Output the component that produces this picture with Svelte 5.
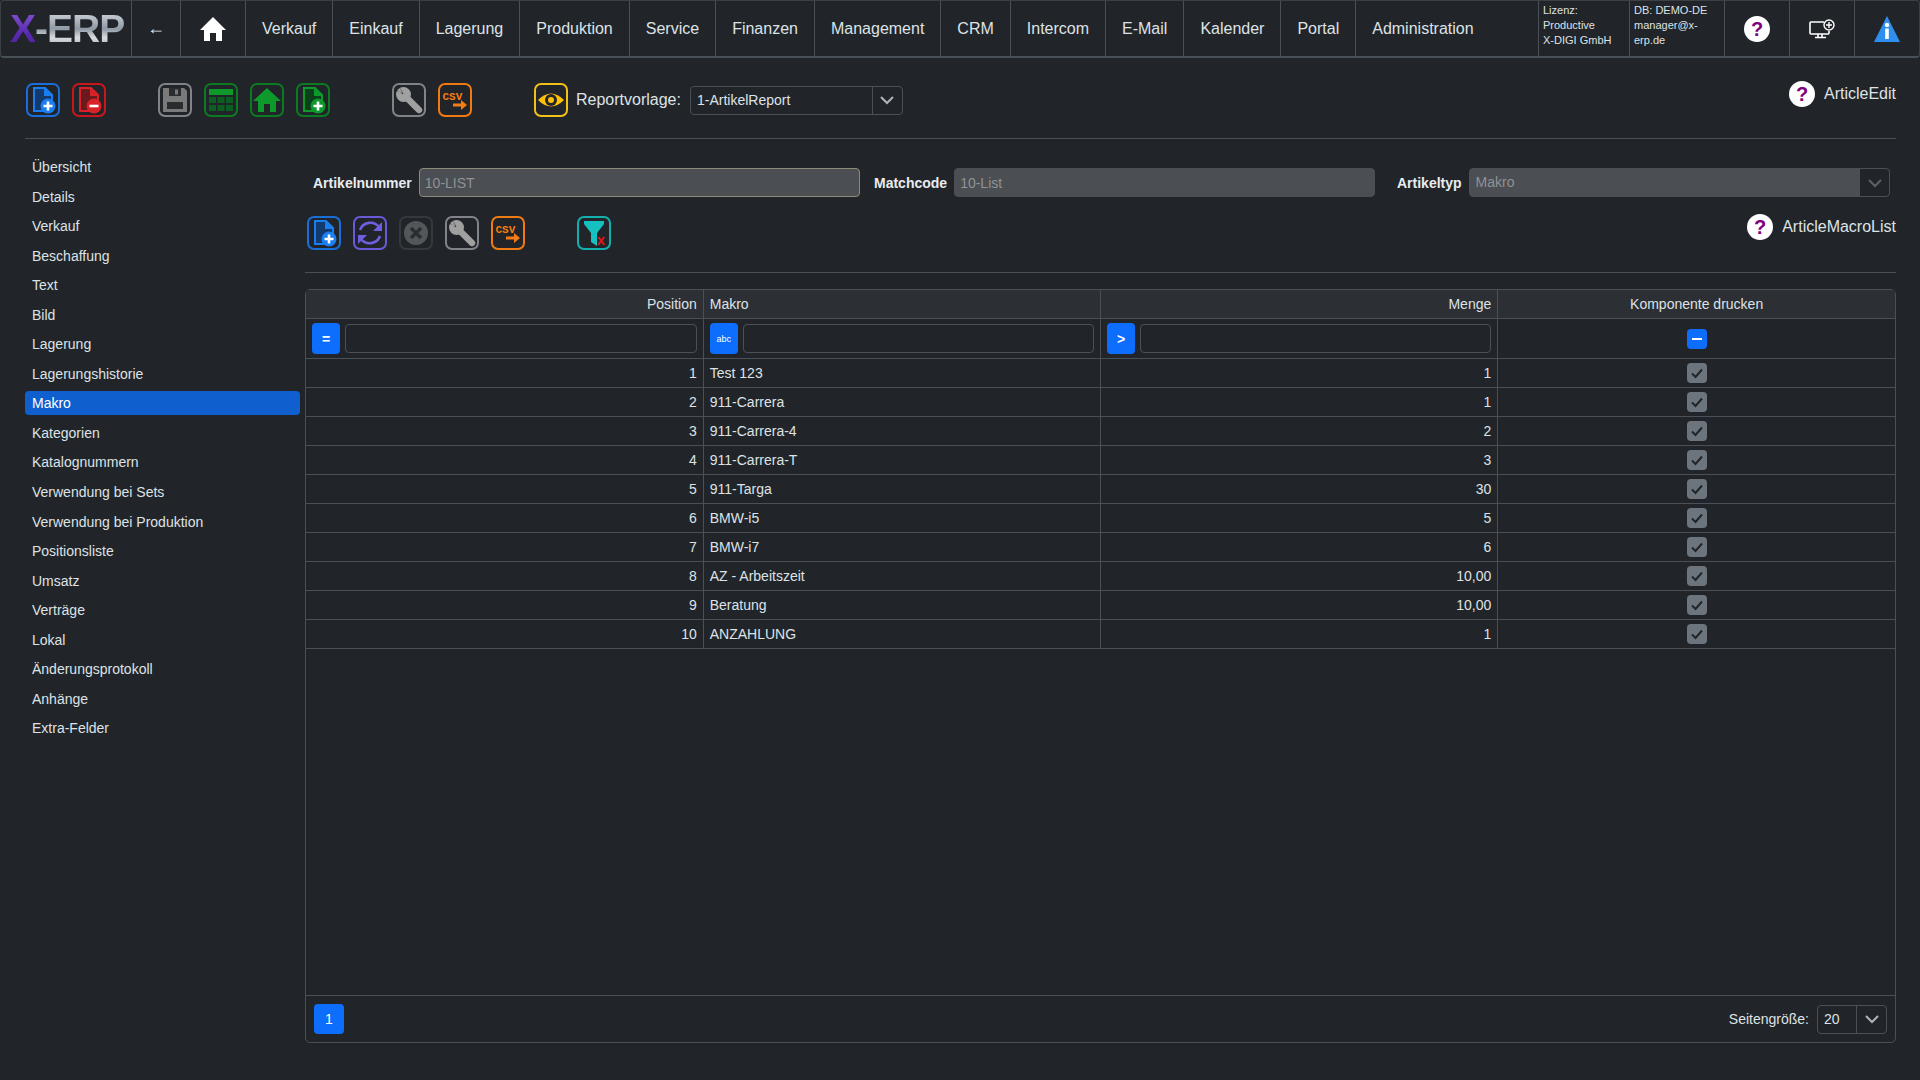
<script>
  const menu = ["Verkauf", "Einkauf", "Lagerung", "Produktion", "Service", "Finanzen", "Management", "CRM", "Intercom", "E-Mail", "Kalender", "Portal"];
  const side = ["Übersicht", "Details", "Verkauf", "Beschaffung", "Text", "Bild", "Lagerung", "Lagerungshistorie", "Makro", "Kategorien", "Katalognummern", "Verwendung bei Sets", "Verwendung bei Produktion", "Positionsliste", "Umsatz", "Verträge", "Lokal", "Änderungsprotokoll", "Anhänge", "Extra-Felder"];
  const rows = [
    ["Test 123", "1"],
    ["911-Carrera", "1"],
    ["911-Carrera-4", "2"],
    ["911-Carrera-T", "3"],
    ["911-Targa", "30"],
    ["BMW-i5", "5"],
    ["BMW-i7", "6"],
    ["AZ - Arbeitszeit", "10,00"],
    ["Beratung", "10,00"],
    ["ANZAHLUNG", "1"]
  ];
</script>

{#snippet doc(color, dark, sign)}
  <svg viewBox="0 0 30 30" width="30" height="30">
    <path d="M6 3h11l7 7v16H6z" fill={dark} stroke={color} stroke-width="2" />
    <path d="M16 3v8h8z" fill={color} />
    <circle cx="20" cy="21" r="7.5" fill={color} />
    <path d={sign === "+" ? "M20 16.5v9M15.5 21h9" : "M15.5 21h9"} stroke="#fff" stroke-width="2.6" />
  </svg>
{/snippet}

{#snippet wrench()}
  <svg viewBox="0 0 30 30" width="30" height="30">
    <path d="M11 11L25 25" stroke="#a0a0a0" stroke-width="6.5" stroke-linecap="round" />
    <circle cx="9.5" cy="9.5" r="7.5" fill="#a0a0a0" />
    <path d="M9 9.5L5 1H1v3z M9.5 9L1 5v-4h4z" fill="#212529" />
  </svg>
{/snippet}

{#snippet csv()}
  <svg viewBox="0 0 30 30" width="30" height="30">
    <text x="2.5" y="15" class="csv">CSV</text>
    <path d="M13 20h11" stroke="#f57c14" stroke-width="3" />
    <path d="M21 15l6 5-6 5z" fill="#f57c14" />
  </svg>
{/snippet}

{#snippet chevron(color)}
  <svg viewBox="0 0 16 16" width="16" height="16">
    <path d="M2 5l6 6 6-6" fill="none" stroke={color} stroke-width="2" />
  </svg>
{/snippet}

{#snippet help(name)}
  <div class="help">
    <svg viewBox="0 0 26 26" width="26" height="26">
      <circle cx="13" cy="13" r="13" fill="#fff" />
      <text x="13" y="20" class="q">?</text>
    </svg>
    <span>{name}</span>
  </div>
{/snippet}

<div class="nav">
  <div class="cell logo"><span class="x">X</span><span class="erp">-ERP</span></div>
  <div class="cell back">←</div>
  <div class="cell home">
    <svg viewBox="0 0 26 24" width="26" height="24">
      <path d="M13 0L26 13h-4v11h-6v-8h-6v8H4V13H0z" fill="#fff" />
    </svg>
  </div>
  {#each menu as item}
    <div class="cell item">{item}</div>
  {/each}
  <div class="cell item grow">Administration</div>
  <div class="cell info w91">
    <span>Lizenz: Productive</span>
    <span>X-DIGI GmbH</span>
  </div>
  <div class="cell info w95">
    <span>DB: DEMO-DE</span>
    <span>manager@x-erp.de</span>
  </div>
  <div class="cell icon">
    <svg viewBox="0 0 26 26" width="26" height="26">
      <circle cx="13" cy="13" r="13" fill="#fff" />
      <text x="13" y="20" class="q">?</text>
    </svg>
  </div>
  <div class="cell icon">
    <svg viewBox="0 0 26 20" width="26" height="20">
      <path d="M15 3H2a1 1 0 0 0-1 1v10a1 1 0 0 0 1 1h17a1 1 0 0 0 1-1v-2" fill="none" stroke="#fff" stroke-width="1.6" />
      <path d="M9 15v3M13 15v3M6 18.5h11" stroke="#fff" stroke-width="1.6" />
      <circle cx="20" cy="6" r="5" fill="#212529" stroke="#fff" stroke-width="1.4" />
      <path d="M20 3v6M17 6h6" stroke="#fff" stroke-width="1.4" />
    </svg>
  </div>
  <div class="cell icon">
    <svg viewBox="0 0 26 26" width="26" height="26">
      <path d="M13 0L26 26H0z" fill="#2f8fef" />
      <circle cx="13" cy="9" r="2.2" fill="#fff" />
      <path d="M13 12.5V23" stroke="#fff" stroke-width="3.6" />
    </svg>
  </div>
</div>

<div class="top">
  <div class="tools first">
    <div class="tb blue">{@render doc("#1a7ef0", "#123a6c", "+")}</div>
    <div class="tb red">{@render doc("#d92228", "#6a1a1e", "-")}</div>
    <div class="tb grey sep52">
      <svg viewBox="0 0 30 30" width="30" height="30">
        <path d="M3 3h21l3 3v21H3z" fill="#7a7a7a" />
        <path d="M9 3h12v8H9z" fill="#2a2d30" />
        <path d="M15 4.5h3v5h-3z" fill="#7a7a7a" />
        <path d="M7 17h16v7H7z" fill="#2a2d30" />
      </svg>
    </div>
    <div class="tb green">
      <svg viewBox="0 0 30 30" width="30" height="30">
        <path d="M3 4h24v6H3z" fill="#0e9a2b" />
        <path d="M3 12h7v6H3zM11.500 12h7v6h-7zM20 12h7v6h-7zM3 20h7v6H3zM11.500 20h7v6h-7zM20 20h7v6h-7z" fill="#0c5f20" />
      </svg>
    </div>
    <div class="tb green">
      <svg viewBox="0 0 30 30" width="30" height="30">
        <path d="M15 3L29 16h-5v11h-6v-8h-6v8H6V16H1z" fill="#0e9a2b" />
      </svg>
    </div>
    <div class="tb green">{@render doc("#0e9a2b", "#0c3f1c", "+")}</div>
    <div class="tb grey sep62">{@render wrench()}</div>
    <div class="tb orange">{@render csv()}</div>
    <div class="tb yellow sep62">
      <svg viewBox="0 0 30 30" width="30" height="30">
        <path d="M2 15Q15 2 28 15Q15 28 2 15z" fill="#ffc107" />
        <circle cx="15" cy="15" r="6" fill="#212529" />
        <circle cx="15" cy="15" r="3" fill="#ffc107" />
      </svg>
    </div>
    <span class="rv">Reportvorlage:</span>
    <div class="select report">
      <span class="val">1-ArtikelReport</span>
      <span class="arrow">{@render chevron("#adb5bd")}</span>
    </div>
  </div>
  {@render help("ArticleEdit")}
</div>
<div class="rule top-rule"></div>

<div class="body">
  <div class="side">
    {#each side as entry}
      <div class="link" class:active={entry === "Makro"}>{entry}</div>
    {/each}
  </div>

  <div class="content">
    <div class="form">
      <div class="field f1">
        <label for="art">Artikelnummer</label>
        <input id="art" class="ro focus" value="10-LIST" disabled />
      </div>
      <div class="field f2">
        <label for="match">Matchcode</label>
        <input id="match" class="ro" value="10-List" disabled />
      </div>
      <div class="field f3">
        <span class="lbl">Artikeltyp</span>
        <div class="select typ">
          <span class="val">Makro</span>
          <span class="arrow">{@render chevron("#5d6268")}</span>
        </div>
      </div>
    </div>

    <div class="top second">
      <div class="tools">
        <div class="tb blue">{@render doc("#1a7ef0", "#123a6c", "+")}</div>
        <div class="tb purple">
          <svg viewBox="0 0 30 30" width="30" height="30">
            <path d="M5 12A11 11 0 0 1 24 9" fill="none" stroke="#6f5fe0" stroke-width="2.6" />
            <path d="M27 4v9h-9z" fill="#6f5fe0" />
            <path d="M25 18A11 11 0 0 1 6 21" fill="none" stroke="#6f5fe0" stroke-width="2.6" />
            <path d="M3 26v-9h9z" fill="#6f5fe0" />
          </svg>
        </div>
        <div class="tb off">
          <svg viewBox="0 0 30 30" width="30" height="30">
            <circle cx="15" cy="15" r="12" fill="#54575a" />
            <path d="M10 10l10 10M20 10L10 20" stroke="#2b2e31" stroke-width="3.4" />
          </svg>
        </div>
        <div class="tb grey">{@render wrench()}</div>
        <div class="tb orange">{@render csv()}</div>
        <div class="tb teal sep52">
          <svg viewBox="0 0 30 30" width="30" height="30">
            <path d="M5 3h20v3l-7 9v13l-6-4v-9L5 6z" fill="#17c0c0" />
            <text x="22" y="27" class="redx">x</text>
          </svg>
        </div>
      </div>
      {@render help("ArticleMacroList")}
    </div>
    <div class="rule"></div>

    <div class="panel">
      <table>
        <thead>
          <tr>
            <th class="r">Position</th>
            <th>Makro</th>
            <th class="r">Menge</th>
            <th class="c">Komponente drucken</th>
          </tr>
        </thead>
        <tbody>
          <tr class="filter">
            <td><div class="fcell"><span class="fbtn eq">=</span><span class="finput"></span></div></td>
            <td><div class="fcell"><span class="fbtn abc">abc</span><span class="finput"></span></div></td>
            <td><div class="fcell"><span class="fbtn gt">&gt;</span><span class="finput"></span></div></td>
            <td class="c"><span class="box minus"></span></td>
          </tr>
          {#each rows as row, i}
            <tr>
              <td class="r">{i + 1}</td>
              <td>{row[0]}</td>
              <td class="r">{row[1]}</td>
              <td class="c">
                <span class="box checked">
                  <svg viewBox="0 0 20 20" width="20" height="20">
                    <path d="M5 10.500l3.500 3.500L15 6.500" fill="none" stroke="#212529" stroke-width="2" />
                  </svg>
                </span>
              </td>
            </tr>
          {/each}
        </tbody>
      </table>
      <div class="foot">
        <span class="page">1</span>
        <div class="size">
          <span>Seitengröße:</span>
          <div class="select small">
            <span class="val">20</span>
            <span class="arrow">{@render chevron("#adb5bd")}</span>
          </div>
        </div>
      </div>
    </div>
  </div>
</div>

<style>
  :global(body) {
    background: #212529;
    color: #dee2e6;
    font-family: "Liberation Sans", Arial, sans-serif;
    font-size: 14px;
  }

  .nav {
    display: flex;
    height: 58px;
    box-sizing: border-box;
    width: 1920px;
    border: 1px solid #3c4146;
    border-bottom: 2px solid #495057;
    border-radius: 4px;
    overflow: hidden;
  }
  .cell {
    display: flex;
    align-items: center;
    flex: none;
    box-sizing: border-box;
    border-left: 1px solid #495057;
    font-size: 16px;
    color: #dee2e6;
  }
  .logo {
    width: 130px;
    border-left: 0;
    padding-left: 9px;
    font-size: 39px;
    font-weight: 700;
    letter-spacing: -1px;
  }
  .x {
    background: linear-gradient(180deg, #8a5ad8, #5a2ab0 60%, #4a209a);
    -webkit-background-clip: text;
    background-clip: text;
    color: transparent;
  }
  .erp {
    background: linear-gradient(180deg, #dfe4ea, #8f99a3 50%, #d8dde2 70%, #8f99a3);
    -webkit-background-clip: text;
    background-clip: text;
    color: transparent;
  }
  .back {
    width: 49px;
    justify-content: center;
    font-size: 18px;
  }
  .home {
    width: 65px;
    justify-content: center;
  }
  .item {
    padding: 0 16px;
  }
  .grow {
    flex: 1;
  }
  .info {
    flex-direction: column;
    align-items: flex-start;
    padding: 2px 0 0 4px;
    font-size: 11px;
    line-height: 15px;
  }
  .w91 { width: 91px; }
  .w95 { width: 95px; }
  .icon {
    width: 65px;
    justify-content: center;
  }

  .top {
    display: flex;
    justify-content: space-between;
    align-items: flex-start;
    padding: 25px 24px 0 26px;
  }
  .tools {
    display: flex;
    align-items: center;
    gap: 12px;
  }
  .tb {
    width: 34px;
    height: 34px;
    box-sizing: border-box;
    border: 2px solid;
    border-radius: 7px;
  }
  .tb svg {
    display: block;
  }
  .sep52 { margin-left: 40px; }
  .sep62 { margin-left: 50px; }
  .blue { border-color: #1a6ed8; }
  .red { border-color: #c9161c; }
  .grey { border-color: #808488; }
  .green { border-color: #0b7a22; }
  .orange { border-color: #f07a14; }
  .yellow { border-color: #f2c018; }
  .purple { border-color: #6a5ad8; }
  .teal { border-color: #14b0b0; }
  .off { border-color: #35383c; }

  .csv {
    font: 700 11px "Liberation Mono", monospace;
    fill: #f57c14;
  }
  .q {
    font: 700 20px "Liberation Sans", sans-serif;
    fill: #800080;
    text-anchor: middle;
  }
  .redx {
    font: 700 15px "Liberation Sans", sans-serif;
    fill: #e01818;
    text-anchor: middle;
  }

  .rv {
    margin-left: -4px;
    font-size: 16px;
    color: #dee2e6;
  }
  .select {
    display: flex;
    align-items: stretch;
    box-sizing: border-box;
    height: 29px;
    border: 1px solid #495057;
    border-radius: 4px;
  }
  .select .val {
    flex: 1;
    padding-left: 6px;
    line-height: 27px;
  }
  .select .arrow {
    display: flex;
    align-items: center;
    justify-content: center;
    width: 29px;
    border-left: 1px solid #495057;
  }
  .report {
    width: 213px;
    margin-left: -3px;
  }

  .help {
    display: flex;
    align-items: center;
    gap: 9px;
    margin-top: -2px;
    font-size: 16px;
    color: #dee2e6;
  }
  .help svg {
    display: block;
  }

  .rule {
    height: 1px;
    background: #495057;
  }
  .top-rule {
    margin: 21px 24px 0 25px;
  }

  .body {
    display: flex;
  }
  .side {
    flex: none;
    box-sizing: border-box;
    width: 305px;
    padding: 16px 5px 0 25px;
    display: flex;
    flex-direction: column;
    gap: 5.55px;
  }
  .link {
    height: 24px;
    line-height: 24px;
    padding-left: 7px;
    border-radius: 4px;
    color: #dee2e6;
  }
  .active {
    background: #0f5fcf;
    color: #fff;
  }

  .content {
    flex: 1;
    padding: 29px 24px 0 0;
  }
  .form {
    display: flex;
    margin-left: 8px;
  }
  .field {
    display: flex;
    align-items: center;
    gap: 7px;
    flex: none;
  }
  .f1 { width: 547px; }
  .f2 { width: 501px; margin-left: 14px; }
  .f3 { width: 493px; margin-left: 22px; }
  label, .lbl {
    font-weight: 700;
    color: #e9ecef;
  }
  .ro {
    flex: 1;
    min-width: 0;
    height: 29px;
    box-sizing: border-box;
    padding: 0 5px;
    border: 1px solid #4b4e52;
    border-radius: 4px;
    background: #4b4e52;
    color: #8f9296;
    font: 14px "Liberation Sans", sans-serif;
    opacity: 1;
  }
  .focus {
    border-color: #8b8b78;
  }
  .typ {
    flex: 1;
  }
  .typ .val {
    background: #4b4e52;
    color: #8f9296;
  }

  .second {
    padding: 19px 0 0 2px;
  }
  .content .rule {
    margin-top: 22px;
  }

  .panel {
    display: flex;
    flex-direction: column;
    box-sizing: border-box;
    height: 754px;
    margin-top: 16px;
    border: 1px solid #495057;
    border-radius: 5px;
  }
  table {
    width: 100%;
    table-layout: fixed;
    border-collapse: collapse;
  }
  th {
    height: 28px;
    padding: 0 6px;
    background: #2c3034;
    font-weight: 400;
    text-align: left;
    border-bottom: 1px solid #495057;
    border-left: 1px solid #495057;
  }
  td {
    height: 28px;
    padding: 0 6px;
    border-bottom: 1px solid #495057;
    border-left: 1px solid #495057;
  }
  th:first-child, td:first-child {
    border-left: 0;
  }
  .r { text-align: right; }
  .c { text-align: center; }
  .filter td {
    height: 39px;
  }
  .fcell {
    display: flex;
    align-items: center;
    gap: 5px;
  }
  .fbtn {
    flex: none;
    display: flex;
    align-items: center;
    justify-content: center;
    width: 28px;
    height: 31px;
    border-radius: 4px;
    background: #0d6efd;
    color: #fff;
    font-weight: 700;
  }
  .abc {
    font-size: 9px;
    font-weight: 400;
  }
  .finput {
    flex: 1;
    height: 29px;
    box-sizing: border-box;
    border: 1px solid #495057;
    border-radius: 4px;
  }
  .box {
    display: inline-block;
    width: 20px;
    height: 20px;
    border-radius: 4px;
    vertical-align: middle;
  }
  .box svg {
    display: block;
  }
  .minus {
    position: relative;
    background: #0d6efd;
  }
  .minus::after {
    content: "";
    position: absolute;
    left: 5px;
    top: 9px;
    width: 10px;
    height: 2px;
    background: #fff;
  }
  .checked {
    background: #6c757d;
  }

  .foot {
    display: flex;
    justify-content: space-between;
    align-items: center;
    margin-top: auto;
    height: 47px;
    box-sizing: border-box;
    padding: 0 8px;
    border-top: 1px solid #495057;
  }
  .page {
    width: 30px;
    height: 30px;
    line-height: 30px;
    text-align: center;
    border-radius: 4px;
    background: #0d6efd;
    color: #fff;
  }
  .size {
    display: flex;
    align-items: center;
    gap: 8px;
  }
  .small {
    width: 70px;
  }
</style>
